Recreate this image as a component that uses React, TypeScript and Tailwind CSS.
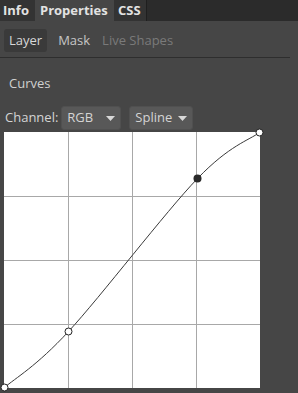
import React from "react";

const pts = [
  { x: 0, y: 255, filled: false },
  { x: 64, y: 199, filled: false },
  { x: 193, y: 46, filled: true },
  { x: 255, y: 0, filled: false },
];

// catmull-rom through the points, as cubic beziers
function curvePath() {
  let d = `M ${pts[0].x} ${pts[0].y}`;
  for (let i = 0; i < pts.length - 1; i++) {
    const p0 = pts[Math.max(i - 1, 0)];
    const p1 = pts[i];
    const p2 = pts[i + 1];
    const p3 = pts[Math.min(i + 2, pts.length - 1)];
    const c1x = p1.x + (p2.x - p0.x) / 6;
    const c1y = p1.y + (p2.y - p0.y) / 6;
    const c2x = p2.x - (p3.x - p1.x) / 6;
    const c2y = p2.y - (p3.y - p1.y) / 6;
    d += ` C ${c1x} ${c1y} ${c2x} ${c2y} ${p2.x} ${p2.y}`;
  }
  return d;
}

function Caret() {
  return (
    <svg width="9" height="5" viewBox="0 0 9 5" className="ml-auto shrink-0">
      <path d="M0 0 H9 L4.5 5 Z" fill="#d8d8d8" />
    </svg>
  );
}

function Dropdown({ label, width }: { label: string; width: string }) {
  return (
    <div
      className={`flex items-center ${width} h-[24px] pl-[5px] pr-[5px] rounded-[3px] bg-[#585858] border border-[#505050] text-[#d4d4d4]`}
    >
      <span>{label}</span>
      <Caret />
    </div>
  );
}

export default function App() {
  const grid = [64, 128, 192];
  return (
    <div
      className="w-[298px] h-[393px] bg-[#464646] overflow-hidden text-[13px]"
      style={{ fontFamily: '"Open Sans", "Noto Sans", sans-serif' }}
    >
      <div className="flex h-[21px] bg-[#2b2b2b] font-bold text-[#e2e2e2] leading-[21px]">
        <div className="w-[35px] bg-[#333333] pl-[3px]">Info</div>
        <div className="w-[79px] bg-[#464646] pl-[5px]">Properties</div>
        <div className="w-[33px] bg-[#333333] pl-[4px] border-r border-[#1f1f1f]">CSS</div>
      </div>

      <div className="flex items-center h-[36px] pt-[3px] pl-[4px] gap-[4px]">
        <div className="h-[23px] px-[5px] rounded-[3px] bg-[#3a3a3a] text-[#d8d8d8] leading-[23px]">Layer</div>
        <div className="px-[7px] text-[#c6c6c6]">Mask</div>
        <div className="px-[1px] text-[#7a7a7a]">Live Shapes</div>
      </div>
      <div className="w-[290px] h-px bg-[#2e2e2e]"></div>

      <div className="pl-[9px] pt-[16px] h-[47px] text-[#d0d0d0]">Curves</div>

      <div className="flex items-center h-[26px] pl-[5px] text-[#d4d4d4]">
        <span className="mr-[3px]">Channel:</span>
        <Dropdown label="RGB" width="w-[60px]" />
        <div className="w-[8px]"></div>
        <Dropdown label="Spline" width="w-[64px]" />
      </div>

      <div className="pl-[4px] pt-[1px]">
        <svg width="256" height="256" viewBox="-0.5 -0.5 256 256" className="bg-white block overflow-visible">
          <rect x="-0.5" y="-0.5" width="256" height="256" fill="#ffffff" />
          {grid.map((g) => (
            <g key={g}>
              <line x1={g} y1={-0.5} x2={g} y2={255.5} stroke="#a8a8a8" strokeWidth="1" />
              <line x1={-0.5} y1={g} x2={255.5} y2={g} stroke="#a8a8a8" strokeWidth="1" />
            </g>
          ))}
          <path d={curvePath()} fill="none" stroke="#3a3a3a" strokeWidth="1" />
          {pts.map((p, i) =>
            p.filled ? (
              <circle key={i} cx={p.x} cy={p.y} r="4" fill="#2a2a2a" />
            ) : (
              <circle key={i} cx={p.x} cy={p.y} r="3.5" fill="#ffffff" stroke="#222222" strokeWidth="1" />
            )
          )}
        </svg>
      </div>
    </div>
  );
}
